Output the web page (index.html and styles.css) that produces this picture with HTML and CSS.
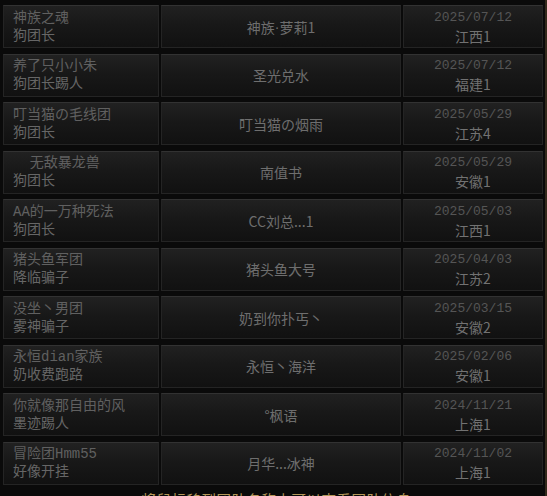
FILE: index.html
```html
<!DOCTYPE html>
<html lang="zh">
<head>
<meta charset="utf-8">
<link rel="stylesheet" href="styles.css">
</head>
<body>
<div class="frame">
  <div class="list">
    <div class="row">
      <div class="cell team"><span>神族之魂</span><span>狗团长</span></div>
      <div class="cell leader">神族<span class="dot">·</span>萝莉1</div>
      <div class="cell info"><span class="date">2025/07/12</span><span class="area">江西1</span></div>
    </div>
    <div class="row">
      <div class="cell team"><span>养了只小小朱</span><span>狗团长踢人</span></div>
      <div class="cell leader">圣光兑水</div>
      <div class="cell info"><span class="date">2025/07/12</span><span class="area">福建1</span></div>
    </div>
    <div class="row">
      <div class="cell team"><span>叮当猫の毛线团</span><span>狗团长</span></div>
      <div class="cell leader">叮当猫の烟雨</div>
      <div class="cell info"><span class="date">2025/05/29</span><span class="area">江苏4</span></div>
    </div>
    <div class="row">
      <div class="cell team"><span>  无敌暴龙兽</span><span>狗团长</span></div>
      <div class="cell leader">南值书</div>
      <div class="cell info"><span class="date">2025/05/29</span><span class="area">安徽1</span></div>
    </div>
    <div class="row">
      <div class="cell team"><span>AA的一万种死法</span><span>狗团长</span></div>
      <div class="cell leader">CC刘总...1</div>
      <div class="cell info"><span class="date">2025/05/03</span><span class="area">江西1</span></div>
    </div>
    <div class="row">
      <div class="cell team"><span>猪头鱼军团</span><span>降临骗子</span></div>
      <div class="cell leader">猪头鱼大号</div>
      <div class="cell info"><span class="date">2025/04/03</span><span class="area">江苏2</span></div>
    </div>
    <div class="row">
      <div class="cell team"><span>没坐丶男团</span><span>雾神骗子</span></div>
      <div class="cell leader">奶到你扑丐丶</div>
      <div class="cell info"><span class="date">2025/03/15</span><span class="area">安徽2</span></div>
    </div>
    <div class="row">
      <div class="cell team"><span>永恒dian家族</span><span>奶收费跑路</span></div>
      <div class="cell leader">永恒丶海洋</div>
      <div class="cell info"><span class="date">2025/02/06</span><span class="area">安徽1</span></div>
    </div>
    <div class="row">
      <div class="cell team"><span>你就像那自由的风</span><span>墨迹踢人</span></div>
      <div class="cell leader">°枫语</div>
      <div class="cell info"><span class="date">2024/11/21</span><span class="area">上海1</span></div>
    </div>
    <div class="row">
      <div class="cell team"><span>冒险团Hmm55</span><span>好像开挂</span></div>
      <div class="cell leader">月华...冰神</div>
      <div class="cell info"><span class="date">2024/11/02</span><span class="area">上海1</span></div>
    </div>
  </div>
  <div class="footer">将鼠标移到团队名称上可以查看团队信息</div>
</div>
</body>
</html>
```
FILE: styles.css
```css
html, body {
  margin: 0;
  padding: 0;
  background: #0a0a0a;
  height: 100%;
  overflow: hidden;
}
.frame {
  width: 547px;
  height: 496px;
  box-sizing: border-box;
  border-right: 2px solid #33291b;
  overflow: hidden;
  display: flex;
  flex-direction: column;
}
.list {
  display: flex;
  flex-direction: column;
  gap: 5.5px;
  padding: 5px 2px 0 3px;
}
.row {
  display: grid;
  grid-template-columns: 156px 240px 140px;
  column-gap: 2px;
  height: 43px;
}
.cell {
  box-sizing: border-box;
  border: 1px solid #242424;
  border-top-color: #323232;
  background: linear-gradient(#212121 0%, #181818 45%, #111111 100%);
  color: #666;
  font-family: "Liberation Mono", "Noto Sans CJK SC", monospace;
  font-size: 14px;
  line-height: 18px;
}
.team {
  display: flex;
  flex-direction: column;
  justify-content: center;
  padding-left: 9px;
  white-space: pre;
}
.team span:first-child {
  color: #606060;
}
.leader {
  display: flex;
  align-items: center;
  justify-content: center;
  font-family: "Noto Sans CJK SC", sans-serif;
  font-size: 14px;
  color: #6e6e6e;
}
.dot {
  font-family: "Liberation Sans", sans-serif;
}
.info {
  display: flex;
  flex-direction: column;
  align-items: center;
  justify-content: center;
}
.date {
  color: #555;
  font-size: 13px;
}
.area {
  color: #727272;
  font-family: "Noto Sans CJK SC", sans-serif;
  font-size: 14px;
}
.footer {
  margin-top: 6px;
  text-align: center;
  color: #b3975a;
  font-family: "Noto Sans CJK SC", sans-serif;
  font-size: 14.5px;
  line-height: 18px;
  letter-spacing: 0.5px;
  padding-left: 8px;
}
```
